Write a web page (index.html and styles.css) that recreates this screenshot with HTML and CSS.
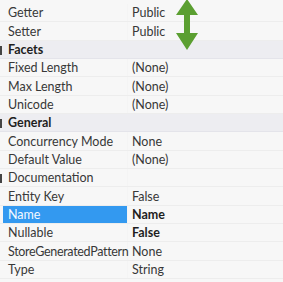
FILE: index.html
```html
<!DOCTYPE html>
<html>
<head>
<meta charset="utf-8">
<link rel="stylesheet" href="styles.css">
</head>
<body>
<div class="grid">
  <div class="row"><div class="name">Getter</div><div class="val">Public</div></div>
  <div class="row"><div class="name">Setter</div><div class="val">Public</div></div>
  <div class="row cat"><div class="name">Facets</div></div>
  <div class="row"><div class="name">Fixed Length</div><div class="val">(None)</div></div>
  <div class="row"><div class="name">Max Length</div><div class="val">(None)</div></div>
  <div class="row"><div class="name">Unicode</div><div class="val">(None)</div></div>
  <div class="row cat"><div class="name">General</div></div>
  <div class="row"><div class="name">Concurrency Mode</div><div class="val">None</div></div>
  <div class="row"><div class="name">Default Value</div><div class="val">(None)</div></div>
  <div class="row exp"><div class="name">Documentation</div><div class="val"></div></div>
  <div class="row"><div class="name">Entity Key</div><div class="val">False</div></div>
  <div class="row sel"><div class="name">Name</div><div class="val bold">Name</div></div>
  <div class="row"><div class="name">Nullable</div><div class="val bold">False</div></div>
  <div class="row"><div class="name tight">StoreGeneratedPattern</div><div class="val">None</div></div>
  <div class="row"><div class="name">Type</div><div class="val">String</div></div>
</div>
<svg class="arrow" width="24" height="52" viewBox="0 0 24 52">
  <path d="M12 0 L23 16 L15 16 L15 34 L23 34 L12 51 L1 34 L9 34 L9 16 L1 16 Z" fill="#5b9f31"/>
</svg>
</body>
</html>
```
FILE: styles.css
```css
html, body {
  margin: 0;
  padding: 0;
  background: #f7f7f7;
  width: 283px;
  height: 282px;
  overflow: hidden;
}
body {
  position: relative;
  font-family: "Lato", "Open Sans", sans-serif;
  font-size: 12.5px;
  color: #383838;
}
.grid {
  padding-top: 4px;
  display: flex;
  flex-direction: column;
}
.row {
  display: flex;
  height: 18.35px;
  box-sizing: border-box;
  border-bottom: 1px solid #ededed;
  align-items: center;
  position: relative;
}
.name {
  width: 125px;
  flex: none;
  margin-left: 3px;
  padding-left: 5px;
  box-sizing: border-box;
  height: 100%;
  display: flex;
  align-items: center;
  white-space: nowrap;
  border-right: 1px solid #f4f4f4;
}
.tight {
  letter-spacing: -0.32px;
}
.val {
  padding-left: 4px;
  white-space: nowrap;
}
.bold { font-weight: bold; color: #1e1e1e; }
.cat {
  background: #ededf1;
  border-bottom-color: #e4e4ea;
}
.cat .name {
  font-weight: bold;
  color: #1e1e1e;
  border-right: none;
}
.cat::before, .exp::before {
  content: "";
  position: absolute;
  left: 0;
  top: 5px;
  width: 2px;
  height: 9px;
  background: #444;
}
.sel .name {
  background: #3399f0;
  color: #f4f8ff;
}
.arrow {
  position: absolute;
  left: 175px;
  top: -1px;
}
```
